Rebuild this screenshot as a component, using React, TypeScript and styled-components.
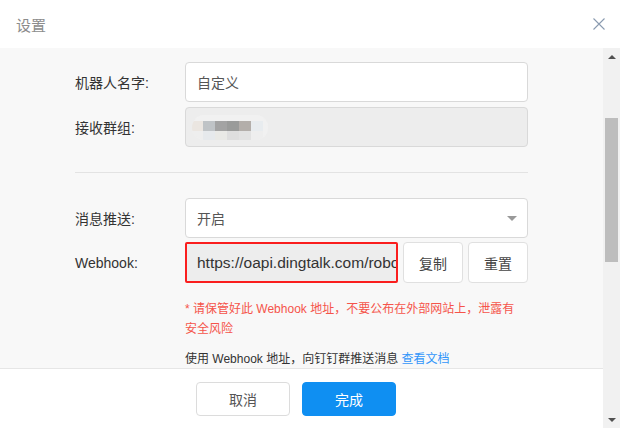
import React from 'react';
import styled, { createGlobalStyle } from 'styled-components';

const GlobalStyle = createGlobalStyle`
  html, body {
    margin: 0;
    padding: 0;
    background: #fff;
  }
  body {
    font-family: "Liberation Sans", "Noto Sans CJK SC", sans-serif;
    -webkit-font-smoothing: antialiased;
  }
`;

const Dialog = styled.div`
  width: 620px;
  height: 428px;
  background: #fff;
  display: flex;
  flex-direction: column;
  overflow: hidden;
`;

const Header = styled.div`
  height: 48px;
  flex: none;
  display: flex;
  align-items: center;
  justify-content: space-between;
  padding: 0 14px 0 16px;
  box-sizing: border-box;
  h2 {
    margin: 0;
    font-size: 15px;
    font-weight: normal;
    color: #8c8c8c;
  }
`;

const CloseBtn = styled.button`
  border: none;
  background: none;
  padding: 0;
  width: 14px;
  height: 14px;
  display: flex;
  align-items: center;
  justify-content: center;
  cursor: pointer;
`;

const Main = styled.div`
  flex: 1;
  display: flex;
  min-height: 0;
`;

const Content = styled.div`
  flex: 1;
  display: flex;
  flex-direction: column;
  min-width: 0;
`;

const Body = styled.div`
  flex: 1;
  background: #f8f8f8;
  padding: 14px 75px 0 75px;
  overflow: hidden;
  box-sizing: border-box;
`;

const Row = styled.div<{ $gap?: number }>`
  display: flex;
  align-items: center;
  margin-bottom: ${({ $gap }) => ($gap ?? 5)}px;
`;

const Label = styled.label`
  width: 110px;
  flex: none;
  font-size: 14px;
  color: #333;
`;

const Field = styled.div<{ $disabled?: boolean }>`
  flex: 1;
  height: 40px;
  box-sizing: border-box;
  border: 1px solid #d9d9d9;
  border-radius: 4px;
  background: ${({ $disabled }) => ($disabled ? '#ededed' : '#fff')};
  display: flex;
  align-items: center;
  padding: 0 11px;
  font-size: 14px;
  color: #555;
`;

const Caret = styled.span`
  margin-left: auto;
  margin-right: -1px;
  width: 0;
  height: 0;
  border-left: 5px solid transparent;
  border-right: 5px solid transparent;
  border-top: 5px solid #999;
`;

const Divider = styled.hr`
  border: none;
  border-top: 1px solid #e3e3e3;
  margin: 25px 0 25px 0;
`;

const HookInput = styled.div`
  width: 213px;
  height: 41px;
  flex: none;
  box-sizing: border-box;
  border: 2px solid #fa1e1e;
  border-radius: 2px;
  background: #ededed;
  display: flex;
  align-items: center;
  padding: 0 0 0 10px;
  font-size: 15.5px;
  color: #333;
  white-space: nowrap;
  overflow: hidden;
`;

const SmallBtn = styled.button`
  width: 60px;
  height: 41px;
  margin-left: 5px;
  box-sizing: border-box;
  border: 1px solid #e0e0e0;
  border-radius: 4px;
  background: #fff;
  font-family: inherit;
  font-size: 14px;
  color: #444;
`;

const Indent = styled.div`
  margin-left: 110px;
`;

const Warning = styled.p`
  margin: 16px 0 0;
  width: 336px;
  font-size: 12px;
  line-height: 20px;
  color: #f5544a;
`;

const Hint = styled.p`
  margin: 10px 0 0;
  font-size: 12px;
  line-height: 20px;
  color: #333;
  white-space: nowrap;
  a {
    color: #3296fa;
    text-decoration: none;
  }
`;

const Footer = styled.div`
  height: 60px;
  flex: none;
  border-top: 1px solid #e6e6e6;
  box-sizing: border-box;
  display: flex;
  align-items: center;
  justify-content: center;
  gap: 12px;
  padding: 1px 11px 0 0;
`;

const FooterBtn = styled.button<{ $primary?: boolean }>`
  width: 94px;
  height: 34px;
  border-radius: 4px;
  font-family: inherit;
  font-size: 14px;
  border: 1px solid ${({ $primary }) => ($primary ? '#0f8ff2' : '#dcdcdc')};
  background: ${({ $primary }) => ($primary ? '#0f8ff2' : '#fff')};
  color: ${({ $primary }) => ($primary ? '#fff' : '#555')};
`;

const Mosaic = styled.div`
  width: 76px;
  height: 25px;
  border-radius: 13px;
  background: #f1f1f1;
  display: grid;
  grid-template-columns: 11px repeat(5, 12px) 5px;
  grid-template-rows: 6px 10px 9px;
  overflow: hidden;
  margin-left: -5px;
  filter: blur(0.4px);
`;

const Cell = styled.span<{ $c: string }>`
  background: ${({ $c }) => $c};
`;

const Scrollbar = styled.div`
  width: 17px;
  flex: none;
  background: #f1f1f1;
  display: flex;
  flex-direction: column;
`;

const Arrow = styled.div<{ $down?: boolean }>`
  height: 17px;
  flex: none;
  display: flex;
  align-items: center;
  justify-content: center;
  &::after {
    content: '';
    width: 0;
    height: 0;
    border-left: 4px solid transparent;
    border-right: 4px solid transparent;
    ${({ $down }) =>
      $down ? 'border-top: 4px solid #505050;' : 'border-bottom: 4px solid #505050;'}
  }
`;

const Track = styled.div`
  flex: 1;
  padding: 53px 2px 0;
`;

const Thumb = styled.div`
  height: 144px;
  background: #bdbdbd;
`;

const mosaic = [
  ['#f1f1f1', '#f1f1f1', '#f1f1f1', '#f1f1f1', '#f1f1f1', '#f1f1f1', '#f1f1f1'],
  ['#ebe6e1', '#bfc3c6', '#a3a3a3', '#9a9b9a', '#b3aeaa', '#e8ecef', '#f1f1f1'],
  ['#eeeeee', '#e6e9ec', '#e9e9e6', '#dedede', '#e2e2e2', '#eeeeee', '#f1f1f1'],
];

const App = () => {
  return (
    <>
      <GlobalStyle />
      <Dialog>
        <Header>
          <h2>设置</h2>
          <CloseBtn aria-label="close">
            <svg width="12" height="12" viewBox="0 0 12 12">
              <path d="M0.5 0.5 L11.5 11.5 M11.5 0.5 L0.5 11.5" stroke="#8a9bb0" strokeWidth="1.1" fill="none" />
            </svg>
          </CloseBtn>
        </Header>
        <Main>
          <Content>
            <Body>
              <Row>
                <Label>机器人名字:</Label>
                <Field>自定义</Field>
              </Row>
              <Row $gap={0}>
                <Label>接收群组:</Label>
                <Field $disabled>
                  <Mosaic>
                    {mosaic.flat().map((c, i) => (
                      <Cell key={i} $c={c} />
                    ))}
                  </Mosaic>
                </Field>
              </Row>
              <Divider />
              <Row $gap={4}>
                <Label>消息推送:</Label>
                <Field>
                  开启
                  <Caret />
                </Field>
              </Row>
              <Row $gap={0}>
                <Label>Webhook:</Label>
                <HookInput>https://oapi.dingtalk.com/robot</HookInput>
                <SmallBtn>复制</SmallBtn>
                <SmallBtn>重置</SmallBtn>
              </Row>
              <Indent>
                <Warning>* 请保管好此 Webhook 地址，不要公布在外部网站上，泄露有安全风险</Warning>
                <Hint>
                  使用 Webhook 地址，向钉钉群推送消息 <a href="#">查看文档</a>
                </Hint>
              </Indent>
            </Body>
            <Footer>
              <FooterBtn>取消</FooterBtn>
              <FooterBtn $primary>完成</FooterBtn>
            </Footer>
          </Content>
          <Scrollbar>
            <Arrow />
            <Track>
              <Thumb />
            </Track>
            <Arrow $down />
          </Scrollbar>
        </Main>
      </Dialog>
    </>
  );
};

export default App;
